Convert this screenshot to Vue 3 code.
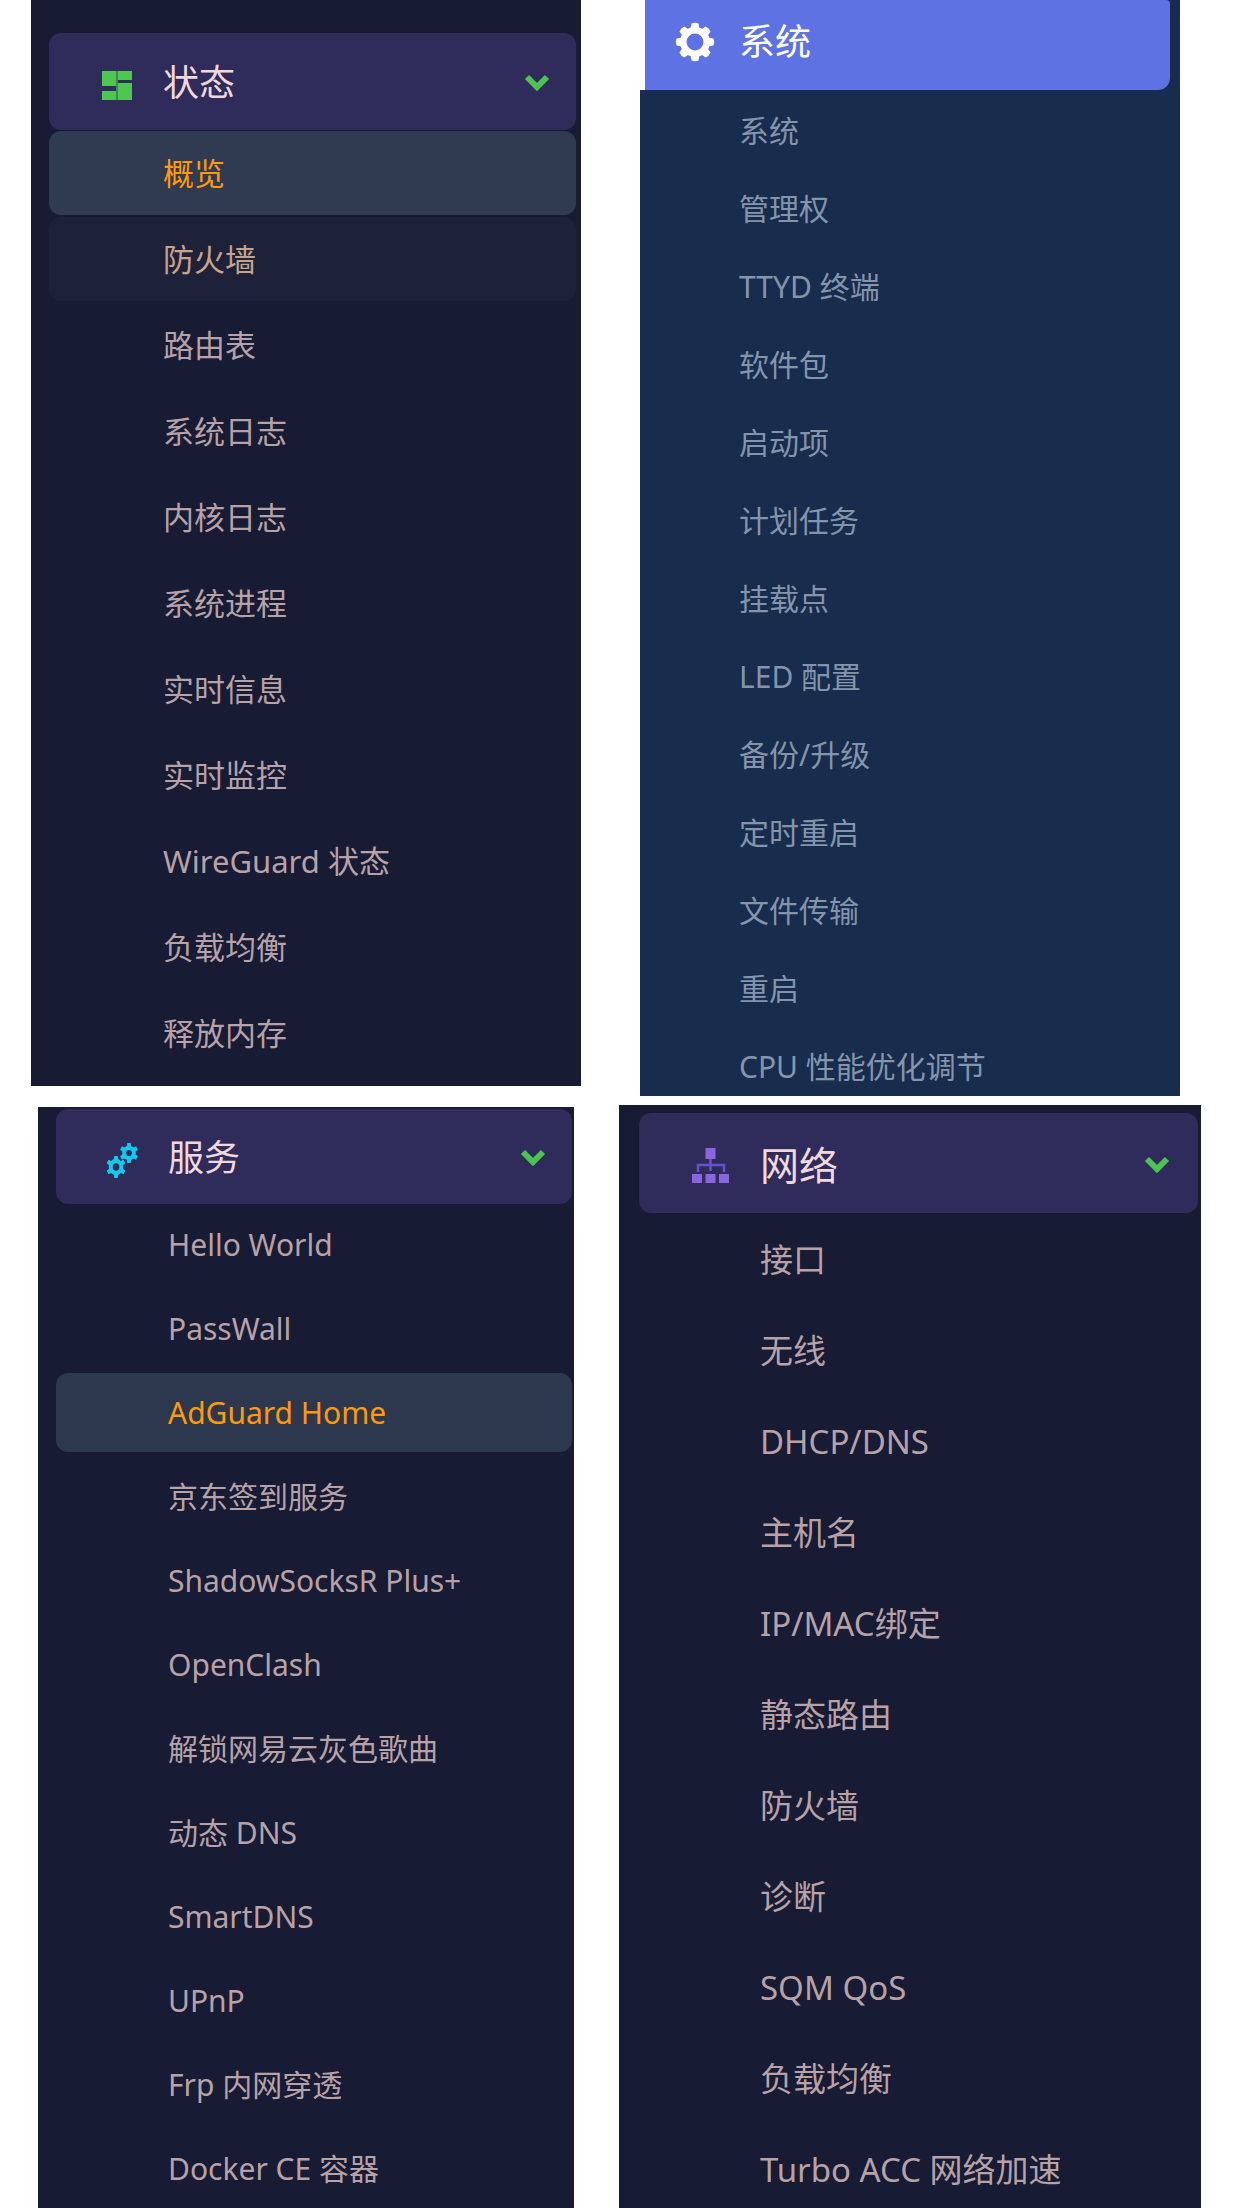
<script setup>
const rows = [
  {
    name: 'upper',
    menus: [
      {
        id: 'status',
        title: '状态',
        current: '概览',
        hovered: '防火墙',
        items: ['概览', '防火墙', '路由表', '系统日志', '内核日志', '系统进程', '实时信息', '实时监控', 'WireGuard 状态', '负载均衡', '释放内存'],
      },
      {
        id: 'system',
        title: '系统',
        items: ['系统', '管理权', 'TTYD 终端', '软件包', '启动项', '计划任务', '挂载点', 'LED 配置', '备份/升级', '定时重启', '文件传输', '重启', 'CPU 性能优化调节'],
      },
    ],
  },
  {
    name: 'lower',
    menus: [
      {
        id: 'services',
        title: '服务',
        current: 'AdGuard Home',
        items: ['Hello World', 'PassWall', 'AdGuard Home', '京东签到服务', 'ShadowSocksR Plus+', 'OpenClash', '解锁网易云灰色歌曲', '动态 DNS', 'SmartDNS', 'UPnP', 'Frp 内网穿透', 'Docker CE 容器'],
      },
      {
        id: 'network',
        title: '网络',
        items: ['接口', '无线', 'DHCP/DNS', '主机名', 'IP/MAC绑定', '静态路由', '防火墙', '诊断', 'SQM QoS', '负载均衡', 'Turbo ACC 网络加速'],
      },
    ],
  },
]
const eighths = [0, 45, 90, 135, 180, 225, 270, 315]
const sixths = [0, 60, 120, 180, 240, 300]
</script>

<template>
  <main class="page">
    <div v-for="row in rows" :key="row.name" class="row" :class="row.name">
      <nav v-for="menu in row.menus" :key="menu.id" class="menu" :class="menu.id" :aria-label="menu.title">
        <div class="head">
          <button type="button" class="toggle" aria-expanded="true">
            <svg class="icon" viewBox="0 0 40 40" aria-hidden="true">
              <g v-if="menu.id === 'status'" fill="#4fc552">
                <path d="M5 8h14v15H5zM21 8h14v9H21zM5 28h14v9H5zM21 20h14v17H21z" />
                <path d="M19 8h2v29h-2z" opacity=".6" />
              </g>
              <g v-else-if="menu.id === 'system'" fill="#fff">
                <circle cx="20" cy="20" r="11.7" fill="none" stroke="#fff" stroke-width="6.5" />
                <path v-for="a in eighths" :key="a" d="M15.500 7l1-5.500q3.500-1.500 7 0l1 5.500z" :transform="`rotate(${a} 20 20)`" />
              </g>
              <g v-else-if="menu.id === 'services'" fill="#14c8ee">
                <g transform="translate(14 29) scale(.88 1)">
                  <circle r="6" fill="none" stroke="#14c8ee" stroke-width="4.500" />
                  <path v-for="a in sixths" :key="a" d="M-2.500-7l.5-4h4l.5 4z" :transform="`rotate(${a})`" />
                </g>
                <g transform="translate(27 15) scale(.88 .95)">
                  <circle r="5.500" fill="none" stroke="#14c8ee" stroke-width="4.500" />
                  <path v-for="a in sixths" :key="a" d="M-2.500-6.500l.5-4h4l.5 4z" :transform="`rotate(${a})`" />
                </g>
              </g>
              <g v-else fill="#8965e0">
                <path d="M15.500 3h10v11h-10zM2 29h10v9H2zM15.500 29h10v9h-10zM29 29h10v9H29z" />
                <path d="M20.500 14v12M8 27v-7h26v7" fill="none" stroke="#6a4fd0" stroke-width="2.500" />
              </g>
            </svg>
            <span class="title">{{ menu.title }}</span>
            <svg v-if="menu.id !== 'system'" class="chevron" viewBox="0 0 26 18" aria-hidden="true">
              <path d="M3 3l10 10L23 3" fill="none" stroke="#4dc352" stroke-width="6" />
            </svg>
          </button>
        </div>
        <ul class="list">
          <li v-for="item in menu.items" :key="item">
            <a
              href="#"
              class="link"
              :class="{ current: item === menu.current, hovered: item === menu.hovered }"
              :aria-current="item === menu.current ? 'page' : undefined"
            >{{ item }}</a>
          </li>
        </ul>
      </nav>
    </div>
  </main>
</template>

<style>
body {
  background: #fff;
}
</style>

<style scoped>
.page {
  box-sizing: border-box;
  min-height: 100vh;
  display: flex;
  flex-direction: column;
  gap: 9px;
  font-family: "Noto Sans", "Noto Sans CJK SC", sans-serif;
}
.row {
  display: grid;
}
.upper {
  grid-template-columns: 550fr 540fr;
  column-gap: 59px;
  padding: 0 62px 0 31px;
  align-items: start;
}
.lower {
  flex: 1;
  grid-template-columns: 536fr 582fr;
  column-gap: 45px;
  padding: 0 41px 0 38px;
}
.menu {
  box-sizing: border-box;
  min-width: 0;
  background: #181b34;
  color: #b7a2a7;
}
.toggle {
  display: flex;
  align-items: center;
  box-sizing: border-box;
  width: 100%;
  height: var(--head);
  margin: 0;
  padding: 2px 26px 0 var(--inset);
  border: 0;
  border-radius: 12px;
  background: #2f2b5b;
  color: #efd9dc;
  font: inherit;
  font-size: 36px;
  line-height: 48px;
  text-align: left;
  cursor: pointer;
}
.icon {
  flex: none;
  width: 40px;
  height: 40px;
  margin-right: var(--space);
}
.title {
  flex: 1;
}
.chevron {
  flex: none;
  width: 26px;
  height: 18px;
}
.list {
  display: flex;
  flex-direction: column;
  gap: var(--gap);
  margin: 0;
  padding: 0;
  list-style: none;
}
.link {
  display: block;
  padding-left: var(--indent);
  border-radius: 12px;
  color: inherit;
  font-size: 30px;
  line-height: var(--line);
  white-space: nowrap;
  text-decoration: none;
}
.hovered {
  background: #1d2139;
  color: #c9a389;
}
.current {
  background: #303a50;
  color: #fb9a0c;
}

.status {
  --head: 97px;
  --inset: 48px;
  --space: 26px;
  --indent: 114px;
  --line: 84px;
  --gap: 2px;
  padding: 33px 5px 11px 18px;
}
.status .list {
  margin-top: 1px;
}
.status .link {
  font-size: 31px;
}

.system {
  --head: 90px;
  --inset: 30px;
  --space: 24px;
  --indent: 99px;
  --line: 56px;
  --gap: 22px;
  padding-bottom: 1px;
  background: #182c4d;
  color: #8495ab;
}
.system .head {
  padding-right: 10px;
  border-left: 5px solid #fff;
}
.system .toggle {
  padding-top: 0;
  padding-bottom: 6px;
  border-radius: 0 4px 12px 0;
  background: #5e72e4;
  color: #fff;
}
.system .list {
  margin-top: 13px;
}

.services {
  --head: 95px;
  --inset: 46px;
  --space: 26px;
  --indent: 112px;
  --line: 79px;
  --gap: 5px;
  margin-top: 2px;
  padding: 2px 2px 0 18px;
}
.services .list {
  margin-top: 1px;
}
.services .current {
  background: #2d384e;
}

.network {
  --head: 100px;
  --inset: 51px;
  --space: 30px;
  --indent: 121px;
  --line: 74px;
  --gap: 17px;
  padding: 8px 3px 0 20px;
}
.network .toggle {
  padding-top: 4px;
  padding-right: 28px;
  font-size: 39px;
}
.network .list {
  margin-top: 10px;
}
.network .link {
  font-size: 33px;
}
</style>
